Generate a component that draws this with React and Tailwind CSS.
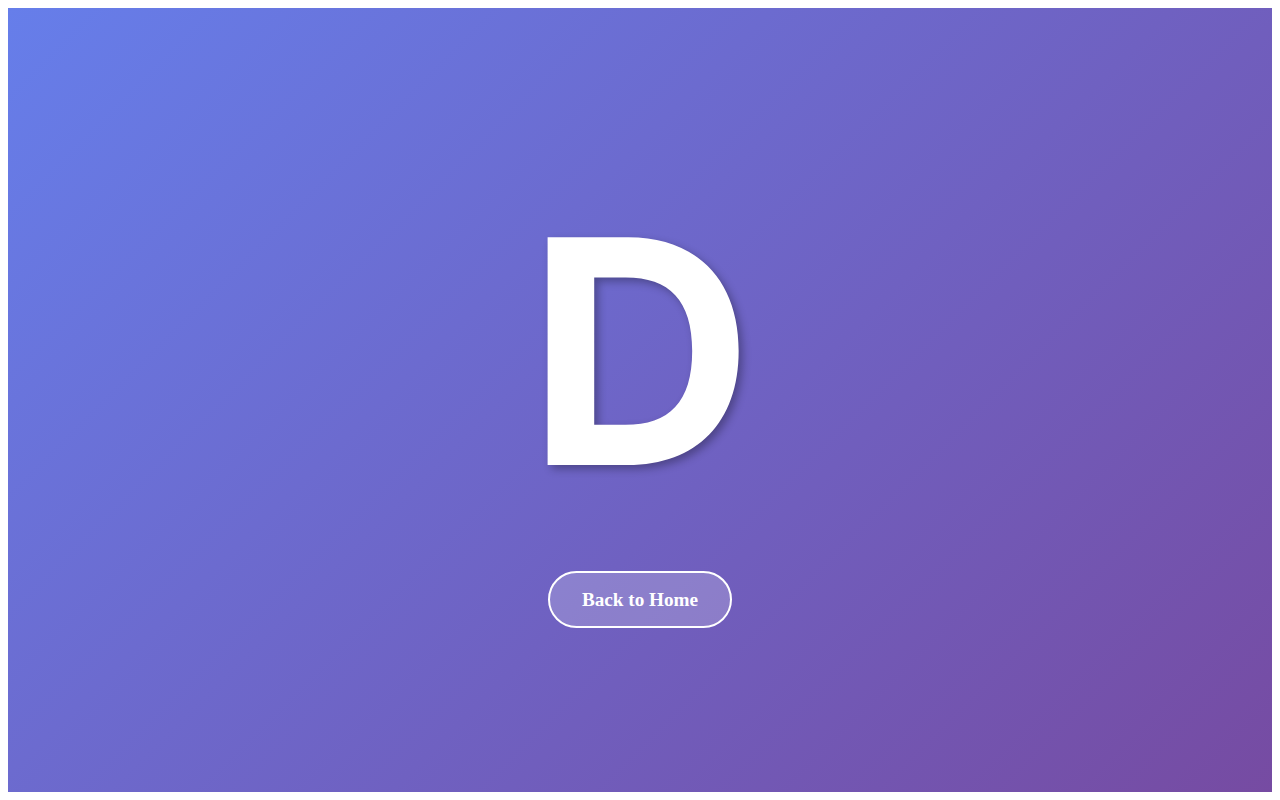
export default function App() {
  return (
    <div className="h-screen w-screen bg-white p-2">
      <div className="flex h-full w-full flex-col items-center justify-center bg-[linear-gradient(135deg,#667eea_0%,#764ba2_100%)] pt-[23px]">
        <h1
          className="m-0 mb-[63px] text-[313px] font-bold leading-none text-white [text-shadow:4px_4px_8px_rgba(0,0,0,0.3)]"
          style={{ fontFamily: 'Inter, "Liberation Sans", sans-serif' }}
        >
          D
        </h1>
        <button
          className="rounded-full border-2 border-white bg-white/20 px-8 py-4 text-[19.2px] font-bold leading-[1.1] text-white"
          style={{ fontFamily: '"Liberation Serif", "Times New Roman", serif' }}
        >
          Back to Home
        </button>
      </div>
    </div>
  )
}
